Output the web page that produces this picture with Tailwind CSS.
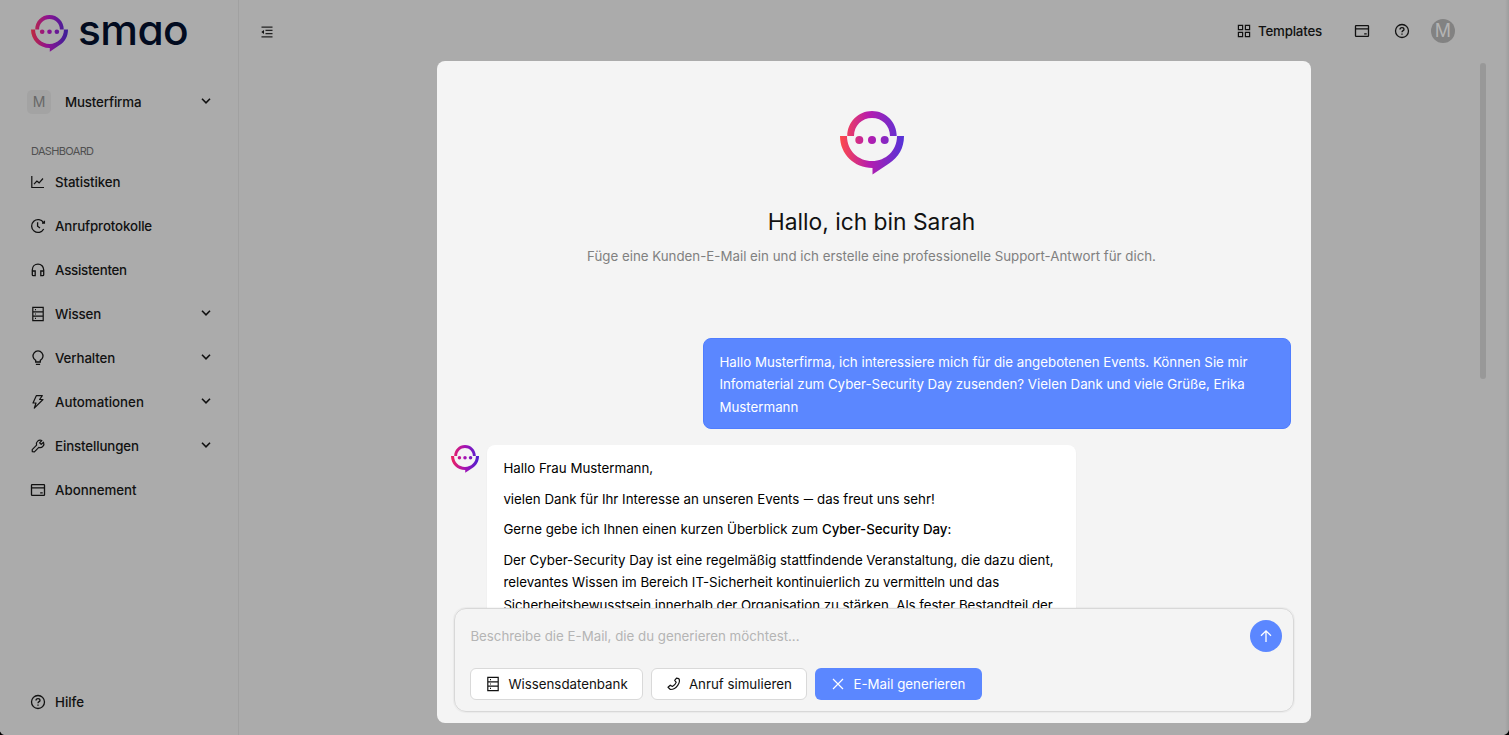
<!DOCTYPE html>
<html lang="de">
<head>
  <meta charset="UTF-8">
  <meta name="viewport" content="width=device-width, initial-scale=1.0">
  <title>smao</title>
  <script src="https://cdn.jsdelivr.net/npm/@tailwindcss/browser@4"></script>
</head>
<body class="relative flex h-screen overflow-hidden bg-[#ababab] font-['Inter',sans-serif] text-[13.3px] text-[#111]">
  <!-- Icons -->
  <svg class="absolute size-0">
    <defs>
      <linearGradient id="brand" x1="0" y1="32" x2="64" y2="32" gradientUnits="userSpaceOnUse">
        <stop offset="0" stop-color="#ff4a48"></stop>
        <stop offset="0.45" stop-color="#b61cae"></stop>
        <stop offset="1" stop-color="#5433d8"></stop>
      </linearGradient>
      <linearGradient id="brand-dark" x1="0" y1="32" x2="64" y2="32" gradientUnits="userSpaceOnUse">
        <stop offset="0" stop-color="#bf2c3c"></stop>
        <stop offset="0.45" stop-color="#8d1192"></stop>
        <stop offset="1" stop-color="#3a2199"></stop>
      </linearGradient>
      <linearGradient id="brand-small" x1="0" y1="32" x2="64" y2="32" gradientUnits="userSpaceOnUse">
        <stop offset="0" stop-color="#f0245c"></stop>
        <stop offset="0.5" stop-color="#a412b4"></stop>
        <stop offset="1" stop-color="#4a20d0"></stop>
      </linearGradient>
    </defs>
    <symbol id="logo" viewBox="0 0 64 64">
      <path d="M7.300 25C7.300 11 18.400 0 32 0S56.700 11 56.700 25H50C50 14.600 42 7 32 7S14 14.600 14 25z"></path>
      <path d="M0 25H7C7 39.500 18 50 32 50S57 39.500 57 25H64C64 37 58.500 46.500 49 52.500L32.500 63.500V57C14 57 0 43 0 25z"></path>
      <circle cx="19.300" cy="29" r="4"></circle>
      <circle cx="32" cy="29" r="4"></circle>
      <circle cx="44.700" cy="29" r="4"></circle>
    </symbol>
    <symbol id="chevron" viewBox="0 0 10 6"><path d="M1 .8 5 4.800 9 .8" fill="none" stroke="currentColor" stroke-width="1.600"></path></symbol>
    <symbol id="book" viewBox="0 0 16 16" fill="none" stroke="currentColor" stroke-width="1.200">
      <path d="M2.800 1.400H13.200V14.600H2.800zM2.800 5.800H13.200M2.800 10.200H13.200M5 3.600h1M5 8h1M5 12.400h1"></path>
    </symbol>
    <symbol id="card" viewBox="0 0 16 16" fill="none" stroke="currentColor" stroke-width="1.300">
      <rect x="1.500" y="2.700" width="13" height="10.600" rx=".6"></rect>
      <path d="M1.500 5.800h13M10.200 10.900h2.500"></path>
    </symbol>
    <symbol id="help" viewBox="0 0 16 16" fill="none" stroke="currentColor" stroke-width="1.300">
      <circle cx="8" cy="8" r="6.500"></circle>
      <path d="M6 6.500C6 5.300 6.900 4.600 8 4.600S10 5.300 10 6.400C10 7.600 8 7.700 8 9.200"></path>
      <path d="M8 10.500v1.200"></path>
    </symbol>
  </svg>

  <!-- Sidebar -->
  <aside class="flex h-full w-[239px] shrink-0 flex-col border-r border-[#a1a1a1] font-medium">
    <div class="flex h-[66px] items-center pl-[31px]">
      <svg class="size-[37px] shrink-0" fill="url(#brand-dark)"><use href="#logo"></use></svg>
      <span class="-mt-[6px] ml-[10px] text-[42.500px] leading-none font-medium tracking-[-0.600px] text-[#020b20] [font-feature-settings:'cv11']">smao</span>
    </div>

    <div class="mt-[24px] flex h-6 items-center pl-[27px] tracking-[-0.150px]">
      <span class="flex size-6 items-center justify-center rounded-[5px] bg-[#a3a3a3] text-sm font-normal text-[#686868]">M</span>
      <span class="ml-[14px] pt-px">Musterfirma</span>
      <svg class="mr-[27px] mb-[2px] ml-auto h-[6px] w-[10px]"><use href="#chevron"></use></svg>
    </div>

    <p class="mt-[29px] h-[17px] pl-[31px] text-[11px] leading-4 font-normal tracking-[-0.650px] text-[#505050]">DASHBOARD</p>

    <nav class="tracking-[-0.120px]">
      <a class="flex h-[44px] items-center pl-[30px]">
        <svg class="mr-[9px] size-4" viewBox="0 0 16 16" fill="none" stroke="currentColor" stroke-width="1.200"><path d="M1.800 2V13.500H14M4 10.200 6.900 7l2.200 1.800L13 4.500"></path></svg>
        <span class="pt-px">Statistiken</span>
      </a>
      <a class="flex h-[44px] items-center pl-[30px]">
        <svg class="mr-[9px] size-4" viewBox="0 0 16 16" fill="none" stroke="currentColor" stroke-width="1.300"><path d="M13.500 4.700A6.400 6.400 0 1 0 13.700 11M14.400 2.700V5.200H12M7.600 4.300V8.200L10 10"></path></svg>
        <span class="pt-px">Anrufprotokolle</span>
      </a>
      <a class="flex h-[44px] items-center pl-[30px]">
        <svg class="mr-[9px] size-4" viewBox="0 0 16 16" fill="none" stroke="currentColor" stroke-width="1.300"><path d="M2.300 9V8C2.300 4.600 4.800 2.200 8 2.200S13.700 4.600 13.700 8V9M2.300 9H5.200V13.700H3.300Q2.300 13.700 2.300 12.700zM13.700 9H10.800V13.700H12.700Q13.700 13.700 13.700 12.700z"></path></svg>
        <span class="pt-px tracking-[-0.250px]">Assistenten</span>
      </a>
      <a class="flex h-[44px] items-center pl-[30px]">
        <svg class="mr-[9px] size-4"><use href="#book"></use></svg>
        <span class="pt-px">Wissen</span>
        <svg class="mr-[27px] mb-[2px] ml-auto h-[6px] w-[10px]"><use href="#chevron"></use></svg>
      </a>
      <a class="flex h-[44px] items-center pl-[30px]">
        <svg class="mr-[9px] size-4" viewBox="0 0 16 16" fill="none" stroke="currentColor" stroke-width="1.300"><path d="M5.700 12V10.400A5 5 0 1 1 10.300 10.400V12zM5.900 14.400H10.100"></path></svg>
        <span class="pt-px">Verhalten</span>
        <svg class="mr-[27px] mb-[2px] ml-auto h-[6px] w-[10px]"><use href="#chevron"></use></svg>
      </a>
      <a class="flex h-[44px] items-center pl-[30px]">
        <svg class="mr-[9px] size-4" viewBox="0 0 16 16" fill="none" stroke="currentColor" stroke-width="1.200" stroke-linejoin="round"><path d="M6.300 1.700H12.300L9.600 5.500H13L4.300 14.200 6 9H3z"></path></svg>
        <span class="pt-px tracking-normal">Automationen</span>
        <svg class="mr-[27px] mb-[2px] ml-auto h-[6px] w-[10px]"><use href="#chevron"></use></svg>
      </a>
      <a class="flex h-[44px] items-center pl-[30px]">
        <svg class="mr-[9px] size-4" viewBox="0 0 16 16" fill="none" stroke="currentColor" stroke-width="1.200" stroke-linejoin="round"><path d="M11.800 2.500A3.800 3.800 0 0 0 6.600 7.200L2.200 11.600 2.300 13.700 4.400 13.800 8.800 9.400A3.800 3.800 0 0 0 13.500 4.200L11.200 6.400 9.600 4.800z"></path></svg>
        <span class="pt-px">Einstellungen</span>
        <svg class="mr-[27px] mb-[2px] ml-auto h-[6px] w-[10px]"><use href="#chevron"></use></svg>
      </a>
      <a class="flex h-[44px] items-center pl-[30px]">
        <svg class="mr-[9px] size-4"><use href="#card"></use></svg>
        <span class="pt-px tracking-normal">Abonnement</span>
      </a>
    </nav>

    <a class="mt-auto mb-[11px] flex h-[44px] items-center pl-[30px]">
      <svg class="mr-[9px] size-4"><use href="#help"></use></svg>
      <span class="pt-px">Hilfe</span>
    </a>
  </aside>

  <!-- Hauptbereich -->
  <main class="flex flex-1 flex-col items-center">
    <header class="flex h-[61px] w-full shrink-0 items-center pt-[2px] pr-[54px] pl-[21px] font-medium">
      <svg class="size-[14px]" viewBox="0 0 14 14" fill="none" stroke="#222" stroke-width="1.200"><path d="M1.500 2.200H12.500M5.500 5.400H12.500M5.500 8.600H12.500M1.500 11.800H12.500"></path><path d="M4 4.900V9.100L1.300 7z" fill="#111" stroke="none"></path></svg>
      <svg class="mb-px ml-auto size-[14px]" viewBox="0 0 14 14" fill="none" stroke="currentColor" stroke-width="1.200"><path d="M1.400 1.400H5.600V5.600H1.400zM8.400 1.400H12.600V5.600H8.400zM1.400 8.400H5.600V12.600H1.400zM8.400 8.400H12.600V12.600H8.400z"></path></svg>
      <span class="ml-[7px] w-[64px] pt-px tracking-[-0.200px] whitespace-nowrap">Templates</span>
      <svg class="mb-px ml-8 size-4"><use href="#card"></use></svg>
      <svg class="mb-px ml-6 size-4"><use href="#help"></use></svg>
      <span class="mb-px ml-[21px] flex size-6 items-center justify-center rounded-full bg-[#828282] text-lg font-normal text-[#b4b4b4]">M</span>
    </header>

    <!-- Chatfenster -->
    <section class="flex h-[662px] w-[874px] flex-col rounded-lg bg-[#f4f4f4]">
      <div class="flex h-[547px] flex-col overflow-hidden">
        <div class="flex shrink-0 flex-col items-center pt-[50px] pr-[5px]">
          <svg class="size-16" fill="url(#brand)"><use href="#logo"></use></svg>
          <h1 class="mt-[29px] text-[22.800px] leading-9">Hallo, ich bin Sarah</h1>
          <p class="mt-[5px] leading-[22px] text-[#808080]">Füge eine Kunden-E-Mail ein und ich erstelle eine professionelle Support-Antwort für dich.</p>
        </div>

        <div class="mt-[71.400px] mr-[19.600px] h-[91px] w-[588px] shrink-0 self-end rounded-lg border border-[#4f7dff] bg-[#5b87ff] px-[15px] pt-[11.500px] leading-[22.400px] text-white">
          <p class="whitespace-nowrap">Hallo Musterfirma, ich interessiere mich für die angebotenen Events. Können Sie mir<br>Infomaterial zum Cyber-Security Day zusenden? Vielen Dank und viele Grüße, Erika<br>Mustermann</p>
        </div>

        <div class="mt-[15.600px] ml-[14.400px] flex shrink-0 gap-[8px]">
          <svg class="size-[28px]" fill="url(#brand-small)"><use href="#logo"></use></svg>
          <div class="w-[588.500px] space-y-[8.200px] rounded-lg bg-white px-4 py-3 leading-[22.400px] whitespace-nowrap text-black shadow-xs">
            <p>Hallo Frau Mustermann,</p>
            <p>vielen Dank für Ihr Interesse an unseren Events <span class="mx-[1.800px] inline-block scale-x-140">–</span> das freut uns sehr!</p>
            <p>Gerne gebe ich Ihnen einen kurzen Überblick zum <b class="font-medium">Cyber-Security Day</b>:</p>
            <p>Der Cyber-Security Day ist eine regelmäßig stattfindende Veranstaltung, die dazu dient,<br>relevantes Wissen im Bereich IT-Sicherheit kontinuierlich zu vermitteln und das<br><span class="tracking-[-0.050px]">Sicherheitsbewusstsein innerhalb der Organisation zu stärken. Als fester Bestandteil der</span></p>
          </div>
        </div>
      </div>

      <!-- Eingabe -->
      <div class="ml-[17.400px] flex h-[104px] w-[840px] flex-col rounded-xl border border-[#d8d8d8] pt-[11px] pr-[11px] pl-[15px] shadow-[0_0_1px_1px_rgba(0,0,0,0.04)]">
        <div class="flex items-center justify-between">
          <span class="pt-px text-[#b5b5b5]">Beschreibe die E-Mail, die du generieren möchtest...</span>
          <button class="flex size-8 items-center justify-center rounded-full bg-[#5b87ff]">
            <svg class="size-4" viewBox="0 0 16 16" fill="none" stroke="#fff" stroke-width="1.300"><path d="M8 14V2.800M3 7.800 8 2.800 13 7.800"></path></svg>
          </button>
        </div>
        <div class="mt-4 flex gap-2 whitespace-nowrap">
          <button class="flex h-8 w-[172.500px] items-center rounded-md border border-[#d9d9d9] bg-white pl-[14px]">
            <svg class="mr-[7px] size-4"><use href="#book"></use></svg>
            <span class="pt-px">Wissensdatenbank</span>
          </button>
          <button class="flex h-8 w-[156.500px] items-center rounded-md border border-[#d9d9d9] bg-white pl-[14px]">
            <svg class="mr-[7px] size-4" viewBox="0 0 16 16" fill="none" stroke="currentColor" stroke-width="1.200" stroke-linejoin="round"><path d="M10.500 2.200 12.800 2.700C15 6 10.500 13.600 4.400 13.500L2 11.300 4.300 9.200 6.400 10.500C8 9.700 9.600 8 10.200 6.400L8.700 4.300z"></path></svg>
            <span class="pt-px">Anruf simulieren</span>
          </button>
          <button class="flex h-8 w-[166.500px] items-center rounded-md bg-[#5b87ff] pl-[15px] text-white">
            <svg class="mr-[7px] size-4" viewBox="0 0 16 16" fill="none" stroke="#fff" stroke-width="1.200"><path d="M3 3 13 13M13 3 3 13"></path></svg>
            <span class="pt-px">E-Mail generieren</span>
          </button>
        </div>
      </div>
    </section>
  </main>

  <!-- Scrollbar und Fensterrand -->
  <div class="absolute top-[63px] left-[1480px] h-[316px] w-[6px] rounded-full bg-[#989898]"></div>
  <div class="absolute top-0 right-0 h-full w-1 bg-linear-to-r from-[#ababab] to-[#9e9e9e]"></div>
  <svg class="absolute bottom-0 left-0 size-[5px]" viewBox="0 0 5 5"><path d="M0 1.500Q1 4 4 5H0z"></path></svg>
  <svg class="absolute right-0 bottom-0 size-[5px]" viewBox="0 0 5 5"><path d="M5 0Q4 4 0 5H5z"></path></svg>
</body>
</html>
